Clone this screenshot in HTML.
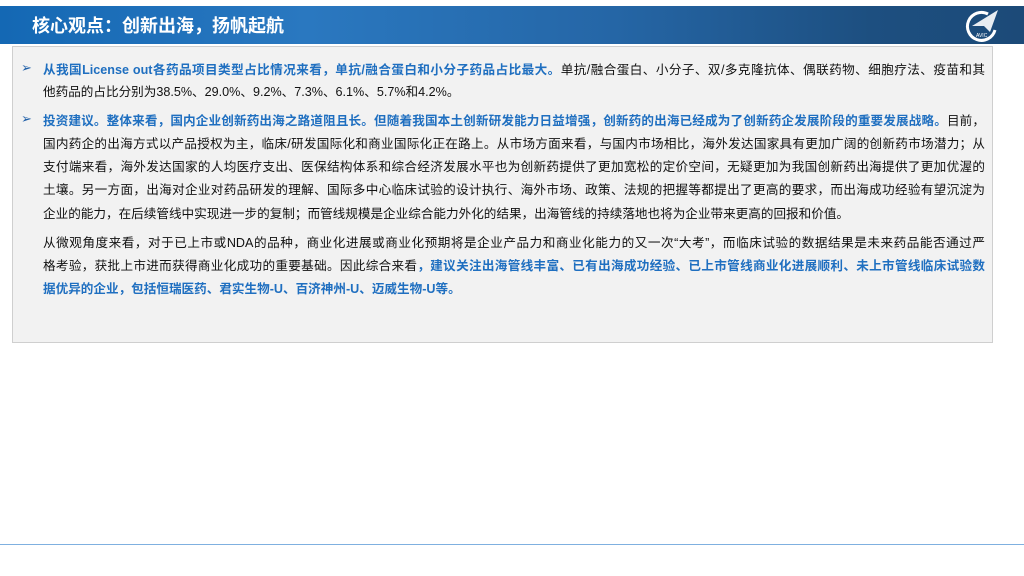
<!DOCTYPE html>
<html><head><meta charset="utf-8"><style>
body{margin:0;width:1024px;height:576px;background:#fff;position:relative;overflow:hidden;font-family:"Liberation Sans","Noto Sans CJK SC",sans-serif;}
.hdr{position:absolute;left:0;top:6px;width:1024px;height:38px;background:linear-gradient(90deg,#1468b4 0%,#2a78c0 30%,#2566a6 60%,#1d4f80 85%,#1c4a78 100%);}
.title{position:absolute;left:32px;top:6px;line-height:38px;color:#fff;font-size:18px;font-weight:bold;font-family:"Noto Sans CJK SC",sans-serif;}
.box{position:absolute;left:12px;top:46px;width:979px;height:295px;background:#f2f2f2;border:1px solid #cfcfcf;}
.l{position:absolute;left:43px;width:942px;font-size:12.6px;line-height:20px;color:#111;white-space:nowrap;text-align:justify;text-align-last:justify;}
.s{text-align-last:left;}
.b{color:#1f6fc0;font-weight:bold;}
.ar{position:absolute;left:21px;font-size:13px;color:#1f5fa8;font-family:"DejaVu Sans",sans-serif;}
.bot{position:absolute;left:0;top:544px;width:1024px;height:1px;background:#7fb0e0;}
</style></head><body>
<div class="hdr"></div>
<div class="title">核心观点：创新出海，扬帆起航</div>
<svg style="position:absolute;left:962px;top:6px" width="40" height="38" viewBox="0 0 40 38">
<path d="M26 8 A14 14 0 1 0 33 24" fill="none" stroke="#fff" stroke-width="3"/>
<path d="M10 20 L36 4 L28 26 L22 20 Z" fill="#fff" opacity="0.9"/>
<text x="14" y="31" font-size="5" fill="#fff" font-family="Liberation Sans">AVIC</text>
</svg>
<div class="box"></div>
<div class="ar" style="top:61px">➢</div>
<div class="l" style="top:60px"><span class="b">从我国License out各药品项目类型占比情况来看，单抗/融合蛋白和小分子药品占比最大。</span>单抗/融合蛋白、小分子、双/多克隆抗体、偶联药物、细胞疗法、疫苗和其</div>
<div class="l s" style="top:82px">他药品的占比分别为38.5%、29.0%、9.2%、7.3%、6.1%、5.7%和4.2%。</div>
<div class="ar" style="top:112px">➢</div>
<div class="l" style="top:111px"><span class="b">投资建议。整体来看，国内企业创新药出海之路道阻且长。但随着我国本土创新研发能力日益增强，创新药的出海已经成为了创新药企发展阶段的重要发展战略。</span>目前，</div>
<div class="l" style="top:134px">国内药企的出海方式以产品授权为主，临床/研发国际化和商业国际化正在路上。从市场方面来看，与国内市场相比，海外发达国家具有更加广阔的创新药市场潜力；从</div>
<div class="l" style="top:157px">支付端来看，海外发达国家的人均医疗支出、医保结构体系和综合经济发展水平也为创新药提供了更加宽松的定价空间，无疑更加为我国创新药出海提供了更加优渥的</div>
<div class="l" style="top:180px">土壤。另一方面，出海对企业对药品研发的理解、国际多中心临床试验的设计执行、海外市场、政策、法规的把握等都提出了更高的要求，而出海成功经验有望沉淀为</div>
<div class="l s" style="top:204px">企业的能力，在后续管线中实现进一步的复制；而管线规模是企业综合能力外化的结果，出海管线的持续落地也将为企业带来更高的回报和价值。</div>
<div class="l" style="top:233px">从微观角度来看，对于已上市或NDA的品种，商业化进展或商业化预期将是企业产品力和商业化能力的又一次“大考”，而临床试验的数据结果是未来药品能否通过严</div>
<div class="l" style="top:256px">格考验，获批上市进而获得商业化成功的重要基础。因此综合来看<span class="b">，建议关注出海管线丰富、已有出海成功经验、已上市管线商业化进展顺利、未上市管线临床试验数</span></div>
<div class="l s" style="top:279px"><span class="b">据优异的企业，包括恒瑞医药、君实生物-U、百济神州-U、迈威生物-U等。</span></div>
<div class="bot"></div>
</body></html>
